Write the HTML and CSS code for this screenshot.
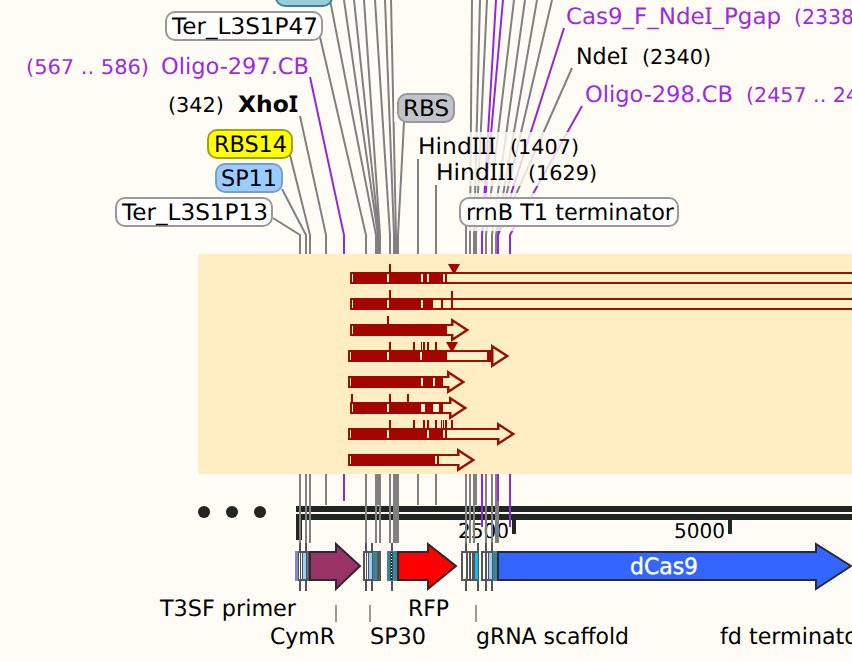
FILE: index.html
```
<!DOCTYPE html>
<html lang="en">
<head>
<meta charset="utf-8">
<title>Plasmid map</title>
<link rel="stylesheet" href="styles.css">
</head>
<body>
<svg class="map" width="852" height="662" viewBox="0 0 852 662">
  <!-- leader lines -->
  <g class="lead">
    <path d="M273 218L300 235V254M282 189L306 235V254M290 155L310 235V254M300 116L326 235V254M320 37L366 235V254"/>
    <path d="M330 0L376 235V254M344 0L378 235V254M354 0L379 235V254M364 0L380 235V254M375 0L390 235V254M385 0L394 235V254M391 0L396 235V254M404 122L398 235V254"/>
    <path d="M472 0L470 235V254M480 0L474 235V254M487 0L476 235V254M514 0L486 235V254M525 0L492 235V254M537 0L496 235V254M552 0L497 235V254M572 68L498 235V254M466 226V254"/>
    <path d="M418 159V254M436 185V254"/>
  </g>
  <g class="lead primer">
    <path d="M310 77L344 235V254M496 0L482 235V254M503 0L482 235V254M564 28L498 235V254M582 106L510 235V254"/>
  </g>
  <g class="halo">
    <rect x="416" y="132" width="165" height="27"/>
    <rect x="434" y="159" width="165" height="27"/>
    <rect x="456" y="193" width="226" height="38"/>
    <rect x="394" y="93" width="62" height="29"/>
  </g>
  <path class="lead" d="M418 159V254M436 185V254M466 226V231"/>

  <!-- boxed labels -->
  <rect class="tag teal" x="276" y="-22" width="56" height="28" rx="9"/>
  <rect class="tag" x="166" y="12" width="156" height="28" rx="9"/>
  <rect class="tag yellow" x="208" y="130" width="84" height="28" rx="9"/>
  <rect class="tag sky" x="216" y="164" width="66" height="28" rx="9"/>
  <rect class="tag" x="116" y="198" width="156" height="28" rx="9"/>
  <rect class="tag gray" x="398" y="94" width="56" height="28" rx="9"/>
  <rect class="tag" x="460" y="198" width="218" height="28" rx="9"/>
  <g class="t">
    <text x="172" y="34" textLength="146" lengthAdjust="spacingAndGlyphs">Ter_L3S1P47</text>
    <text x="214" y="152" textLength="73" lengthAdjust="spacingAndGlyphs">RBS14</text>
    <text x="221" y="186" textLength="56" lengthAdjust="spacingAndGlyphs">SP11</text>
    <text x="122" y="220" textLength="146" lengthAdjust="spacingAndGlyphs">Ter_L3S1P13</text>
    <text x="403" y="116" textLength="46" lengthAdjust="spacingAndGlyphs">RBS</text>
    <text x="466" y="220" textLength="208" lengthAdjust="spacingAndGlyphs">rrnB T1 terminator</text>
    <text x="418" y="154" textLength="78" lengthAdjust="spacingAndGlyphs">Hind<tspan class="i">III</tspan></text>
    <text x="436" y="180" textLength="78" lengthAdjust="spacingAndGlyphs">Hind<tspan class="i">III</tspan></text>
    <text x="576" y="64" textLength="52" lengthAdjust="spacingAndGlyphs">Nde<tspan class="i">I</tspan></text>
    <text class="b" x="238" y="112" textLength="60" lengthAdjust="spacingAndGlyphs">Xho<tspan class="i">I</tspan></text>
    <text x="160" y="616" textLength="136" lengthAdjust="spacingAndGlyphs">T3SF primer</text>
    <text x="270" y="644" textLength="65" lengthAdjust="spacingAndGlyphs">CymR</text>
    <text x="370" y="644" textLength="56" lengthAdjust="spacingAndGlyphs">SP30</text>
    <text x="408" y="616" textLength="41" lengthAdjust="spacingAndGlyphs">RFP</text>
    <text x="476" y="644" textLength="153" lengthAdjust="spacingAndGlyphs">gRNA scaffold</text>
    <text x="720" y="644" textLength="147" lengthAdjust="spacingAndGlyphs">fd terminator</text>
  </g>
  <g class="t p">
    <text x="161" y="74" textLength="148" lengthAdjust="spacingAndGlyphs">Oligo-297.CB</text>
    <text x="566" y="24" textLength="215" lengthAdjust="spacingAndGlyphs">Cas9_F_Nde<tspan class="i">I</tspan>_Pgap</text>
    <text x="585" y="102" textLength="148" lengthAdjust="spacingAndGlyphs">Oligo-298.CB</text>
  </g>
  <g class="t n p">
    <text x="26" y="74" textLength="123" lengthAdjust="spacingAndGlyphs">(567 .. 586)</text>
    <text x="794" y="24" textLength="60" lengthAdjust="spacingAndGlyphs">(2338</text>
    <text x="746" y="102" textLength="113" lengthAdjust="spacingAndGlyphs">(2457 .. 24</text>
  </g>
  <g class="t n">
    <text x="168" y="112" textLength="56" lengthAdjust="spacingAndGlyphs">(342)</text>
    <text x="510" y="154" textLength="69" lengthAdjust="spacingAndGlyphs">(1407)</text>
    <text x="528" y="180" textLength="69" lengthAdjust="spacingAndGlyphs">(1629)</text>
    <text x="642" y="64" textLength="69" lengthAdjust="spacingAndGlyphs">(2340)</text>
  </g>

  <!-- alignment tracks -->
  <rect class="band" x="198" y="254" width="654" height="220"/>
  <g class="track">
    <path class="o" d="M860 273H351V283H860M860 299H351V309H860"/>
    <path class="o" d="M453 325H351V335H453M492 351H349V361H492M448 377H349V387H448M450 403H351V413H450M498 429H349V439H498M458 455H349V465H458"/>
    <path class="f" d="M353 272h94v12h-94zM353 298h80v12h-80zM353 324h94v12h-94zM351 350h96v12h-96zM487 350h5v12h-5zM351 376h92v12h-92zM353 402h90v12h-90zM351 428h96v12h-96zM351 454h88v12h-88z"/>
    <path class="f" d="M441 299h2v10h-2zM451 291h2v18h-2zM448 264h12l-5 9h-2zM446 342h12l-5 9h-2z"/>
    <path class="f" d="M389 264h2v8h-2zM389 290h2v8h-2zM387 316h2v8h-2zM389 342h2v8h-2zM413 342h2v8h-2zM421 342h1v8h-1zM423 342h2v8h-2zM427 342h2v8h-2zM435 342h2v8h-2zM351 394h2v8h-2zM389 394h2v8h-2zM407 394h2v8h-2zM389 420h2v8h-2zM413 420h2v8h-2zM423 420h2v8h-2zM427 420h2v8h-2zM435 420h2v8h-2zM441 420h1v8h-1zM443 420h1v8h-1zM445 420h2v8h-2zM451 420h2v8h-2z"/>
    <path class="g" d="M387 274h2v8h-2zM421 274h2v8h-2zM427 274h2v8h-2zM443 274h2v8h-2zM387 300h2v8h-2zM421 300h2v8h-2zM387 352h2v8h-2zM420 352h2v8h-2zM421 378h2v8h-2zM433 378h2v8h-2zM387 404h2v8h-2zM421 404h4v8h-4zM433 404h6v8h-6zM387 430h2v8h-2zM427 430h2v8h-2zM443 430h2v8h-2zM435 456h2v8h-2z"/>
    <path class="h" d="M451 318L469.500 330L451 342ZM491 344L509.500 356L491 368ZM447 370L465.500 382L447 394ZM449 396L467.500 408L449 420ZM497 422L515.500 434L497 446ZM457 448L475.500 460L457 472Z"/>
    <path class="o2" d="M451 326H453.500V322.500L465 330L453.500 337.500V334H451ZM493.500 348.500L505 356L493.500 363.500ZM447 378H449.500V374.500L461 382L449.500 389.500V386H447ZM449 404H451.500V400.500L463 408L451.500 415.500V412H449ZM497 430H499.500V426.500L511 434L499.500 441.500V438H497ZM457 456H459.500V452.500L471 460L459.500 467.500V464H457Z"/>
  </g>

  <!-- backbone and ruler -->
  <g class="bone">
    <circle cx="204" cy="512" r="6"/><circle cx="232" cy="512" r="6"/><circle cx="260" cy="512" r="6"/>
    <path d="M296 506H852V512H296zM296 514H852V520H302V540H296zM512 520h4v14h-4zM728 520h4v14h-4z"/>
  </g>
  <g class="t n">
    <text x="458" y="538" textLength="51" lengthAdjust="spacingAndGlyphs">2500</text>
    <text x="674" y="538" textLength="51" lengthAdjust="spacingAndGlyphs">5000</text>
  </g>
  <path class="lead primer" d="M344 474V501M482 474V527M510 474V527"/>
  <path class="lead" d="M300 474V543M306 474V543M310 474V543M326 474V505M366 474V543M376 474V543M380 474V543M378 474V505M390 474V543M394 474V543M396 474V543M398 474V543M418 474V505M436 474V505M466 474V543M470 474V543M474 474V543M476 474V505M486 474V543M492 474V543M496 474V543M498 474V543"/>
  <path class="lead primer" d="M498 474V501"/>

  <!-- features -->
  <g class="feat">
    <path class="tick" d="M300 543V591M306 543V591M366 543V591M372 543V591M392 543V591M466 543V591M478 543V591M486 543V591M492 543V591"/>
    <rect fill="#8484d4" x="295" y="551" width="3" height="30"/>
    <rect fill="#555" x="298" y="551" width="12" height="30"/>
    <rect fill="#fff" x="299" y="553" width="1" height="26"/>
    <rect fill="#fff" x="301" y="553" width="1" height="26"/>
    <rect fill="#99ccff" x="303" y="553" width="3" height="26"/>
    <rect fill="#6f6f6f" x="307" y="553" width="1" height="26"/>
    <path class="s" fill="#993366" d="M310 552H336V544L360 566L336 589V580H310Z"/>
    <rect fill="#555" x="363" y="551" width="18" height="30"/>
    <rect fill="#fff" x="365" y="553" width="1" height="26"/>
    <rect fill="#fff" x="367" y="553" width="1" height="26"/>
    <rect fill="#99ccff" x="369" y="553" width="3" height="26"/>
    <rect fill="#3b8499" x="373" y="552" width="4" height="28"/>
    <rect fill="#3b8499" x="387" y="551" width="11" height="30"/>
    <path d="M391.5 552V580" stroke="#222" stroke-width="2"/>
    <path d="M391.5 553V580" stroke="#fff" stroke-width="1" stroke-dasharray="1 2"/>
    <path class="s" fill="#f00" d="M398 552H428V544L456 566L428 589V580H398Z"/>
    <rect fill="#555" x="461" y="551" width="18" height="30"/>
    <rect fill="#fff" x="463" y="553" width="3" height="26"/>
    <rect fill="#fff" x="468" y="553" width="1" height="26"/>
    <rect fill="#fff" x="471" y="553" width="1" height="26"/>
    <rect fill="#14bfee" x="475" y="553" width="3" height="26"/>
    <rect fill="#555" x="481" y="551" width="12" height="30"/>
    <rect fill="#fff" x="483" y="553" width="2" height="26"/>
    <rect fill="#fff" x="487" y="553" width="1" height="26"/>
    <rect fill="#99ccff" x="489" y="553" width="3" height="26"/>
    <rect fill="#3b8499" x="493" y="551" width="5" height="30"/>
    <path class="s" fill="#3366ff" d="M498 552H816V544L851 566L816 589V580H498Z"/>
    <path class="thin" d="M336 605V622M370 605V622M476 605V622"/>
  </g>
  <text class="t w" x="630" y="574" textLength="68" lengthAdjust="spacingAndGlyphs">dCas9</text>
</svg>
</body>
</html>
```
FILE: styles.css
```
body { margin: 0; background: #fffcf5; overflow: hidden; }
.map { display: block; }
.lead { fill: none; stroke: #808080; stroke-width: 2; }
.primer, .primer path { stroke: #9328d6; }
.halo { fill: #fffcf5; opacity: .8; }
.tag { fill: #fff; stroke: #999; stroke-width: 2; }
.tag.teal { fill: #9ccdd6; stroke: #3b8497; }
.tag.yellow { fill: #ff0; stroke: #a0a020; }
.tag.sky { fill: #99ccff; stroke: #7a9fc6; }
.tag.gray { fill: #c0c3ca; stroke: #97989c; }
.t { font-family: "DejaVu Sans", Verdana, sans-serif; font-size: 22.6px; fill: #000; white-space: pre; text-rendering: geometricPrecision; }
.n { font-size: 20.4px; }
.p { fill: #9a2be0; }
.b { font-weight: bold; }
.i { font-family: "Noto Sans", sans-serif; font-size: 23px; }
.w { fill: #fff; stroke: #fff; stroke-width: .4; }
.band { fill: #ffeec4; }
.o { fill: #fff0c8; stroke: #971200; stroke-width: 2; }
.h { fill: #971200; }
.o2 { fill: #fff0c8; }
.f { fill: #a30600; }
.g { fill: #fff3d6; }
.bone { fill: #222622; }
.tick { fill: none; stroke: #555; stroke-width: 2; }
.s { stroke: #2a2830; stroke-width: 2; }
.thin { stroke: #808080; stroke-width: 1.6; }
```
